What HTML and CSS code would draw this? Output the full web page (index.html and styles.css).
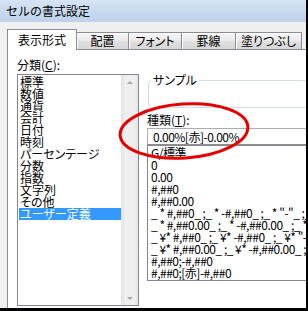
FILE: index.html
```html
<!DOCTYPE html>
<html lang="ja">
<head>
    <meta charset="UTF-8">
    <title>セルの書式設定</title>
    <link rel="stylesheet" href="styles.css">
</head>
<body>
    <div class="window">
        <div class="titlebar">セルの書式設定</div>

        <div class="frame">
            <div class="tabs">
                <div class="tab active tab-format">表示形式</div>
                <div class="tab tab-align">配置</div>
                <div class="tab tab-font">フォント</div>
                <div class="tab tab-border">罫線</div>
                <div class="tab tab-fill">塗りつぶし</div>
            </div>

            <div class="panel">
                <div class="col-left">
                    <div class="label">分類(<u>C</u>):</div>
                    <div class="listbox">
                        <ul class="items">
                            <li>標準</li>
                            <li>数値</li>
                            <li>通貨</li>
                            <li>会計</li>
                            <li>日付</li>
                            <li>時刻</li>
                            <li>パーセンテージ</li>
                            <li>分数</li>
                            <li>指数</li>
                            <li>文字列</li>
                            <li>その他</li>
                            <li class="selected">ユーザー定義</li>
                        </ul>
                        <div class="scrollbar">
                            <span class="arrow up"></span>
                            <span class="arrow down"></span>
                        </div>
                    </div>
                </div>

                <div class="col-right">
                    <fieldset class="sample">
                        <legend>サンプル</legend>
                        <div class="sample-body"></div>
                    </fieldset>

                    <div class="label type-label">種類(<u>T</u>):</div>
                    <div class="input">0.00%[赤]-0.00%</div>
                    <ul class="formats">
                        <li>G/標準</li>
                        <li>0</li>
                        <li>0.00</li>
                        <li>#,##0</li>
                        <li>#,##0.00</li>
                        <li>_ * #,##0_ ;_ * -#,##0_ ;_ * "-"_ ;_ @_ </li>
                        <li>_ * #,##0.00_ ;_ * -#,##0.00_ ;_ * "-"??_ ;_ @_ </li>
                        <li>_ ¥* #,##0_ ;_ ¥* -#,##0_ ;_ ¥* "-"_ ;_ @_ </li>
                        <li>_ ¥* #,##0.00_ ;_ ¥* -#,##0.00_ ;_ ¥* "-"??_ ;_ @_ </li>
                        <li>#,##0;-#,##0</li>
                        <li>#,##0;[赤]-#,##0</li>
                    </ul>
                </div>
            </div>
        </div>

        <!-- red marker drawn over the dialog -->
        <svg class="annotation" width="306" height="308" viewBox="0 0 306 308">
            <ellipse cx="184" cy="131" rx="64" ry="27" fill="none" stroke="#e60000" stroke-width="3" transform="rotate(-4 184 131)"/>
        </svg>
    </div>
</body>
</html>
```

FILE: styles.css
```css
/* Windows 7 style format dialog */
body {
    margin: 0;
    width: 308px;
    height: 311px;
    overflow: hidden;
    background: #000;
    font-family: "Noto Sans CJK JP", sans-serif;
    font-size: 12px;
    color: #000;
}

.window {
    position: relative;
    width: 306px;
    height: 308px;
    background: #f0f0f0;
    display: flex;
    flex-direction: column;
    overflow: hidden;
}

.titlebar {
    flex: none;
    height: 22px;
    line-height: 22px;
    padding-left: 6px;
    background: linear-gradient(#d6e4f4, #bcd2ea);
}

.frame {
    flex: 1;
    min-height: 0;
    display: flex;
    flex-direction: column;
    padding: 7px 0 0 7px;
}

.tabs {
    flex: none;
    height: 20px;
    display: flex;
    align-items: flex-end;
    position: relative;
    z-index: 1;
}

.tab {
    box-sizing: border-box;
    height: 17px;
    line-height: 16px;
    margin-left: -1px;
    border: 1px solid #898c95;
    border-bottom: none;
    text-align: center;
    white-space: nowrap;
    font-feature-settings: "palt";
    background: linear-gradient(#f6f6f6, #ebebeb 45%, #dfdfdf 55%, #d6d6d6);
    box-shadow: inset 1px 1px 0 #fff;
}

.tab.active {
    height: 21px;
    line-height: 20px;
    margin-left: 0;
    margin-bottom: -1px;
    background: #fff;
    box-shadow: none;
}

.tab-format { width: 70px; }
.tab-align { width: 53px; }
.tab-font { width: 54px; }
.tab-border { width: 55px; }
.tab-fill { width: 67px; }

.panel {
    flex: 1;
    min-height: 0;
    display: flex;
    background: #fff;
    border-top: 1px solid #898c95;
    border-left: 1px solid #898c95;
    padding: 9px 0 0 9px;
    overflow: hidden;
}

.label {
    height: 12px;
    line-height: 12px;
    white-space: nowrap;
}

.col-left {
    flex: none;
    width: 122px;
    display: flex;
    flex-direction: column;
}

.listbox {
    box-sizing: border-box;
    height: 232px;
    margin-top: 3px;
    border: 1px solid #828790;
    display: flex;
}

.items {
    flex: 1;
    list-style: none;
    margin: 0;
    padding: 1px 0 0 1px;
}

.items li {
    height: 12px;
    line-height: 12px;
    padding-left: 1px;
    white-space: nowrap;
    font-feature-settings: "palt";
}

.items li.selected {
    background: #3399ff;
    color: #fff;
}

.scrollbar {
    flex: none;
    width: 17px;
    display: flex;
    flex-direction: column;
    justify-content: space-between;
    align-items: center;
    padding: 6px 0 5px;
    box-sizing: border-box;
    background: linear-gradient(to right, #e2e2e2, #efefef 25%, #efefef 75%, #e6e6e6);
}

.arrow {
    width: 0;
    height: 0;
    border-left: 3px solid transparent;
    border-right: 3px solid transparent;
}

.arrow.up {
    border-bottom: 3px solid #a8a8a8;
}

.arrow.down {
    border-top: 3px solid #a8a8a8;
}

.col-right {
    flex: none;
    width: 175px;
    margin-left: 8px;
}

.sample {
    margin: 15px 0 0 1px;
    padding: 0;
    border: 1px solid #d5dfe5;
    border-radius: 3px;
}

.sample legend {
    margin-left: 2px;
    padding: 0 2px;
    line-height: 12px;
    font-feature-settings: "palt";
}

.sample-body {
    height: 21px;
}

.type-label {
    margin-top: 6px;
}

.input {
    box-sizing: border-box;
    height: 17px;
    margin-top: 2px;
    padding-left: 5px;
    line-height: 15px;
    border: 1px solid #abadb3;
    border-bottom-color: #8e8f8f;
    white-space: nowrap;
    letter-spacing: -0.5px;
}

.formats {
    box-sizing: border-box;
    height: 136px;
    list-style: none;
    margin: 0;
    padding: 1px 0 0 3px;
    border: 1px solid #828790;
    overflow: hidden;
}

.formats li {
    height: 12px;
    line-height: 12px;
    white-space: nowrap;
    letter-spacing: -0.5px;
}

.annotation {
    position: absolute;
    left: 0;
    top: 0;
    pointer-events: none;
}
```
